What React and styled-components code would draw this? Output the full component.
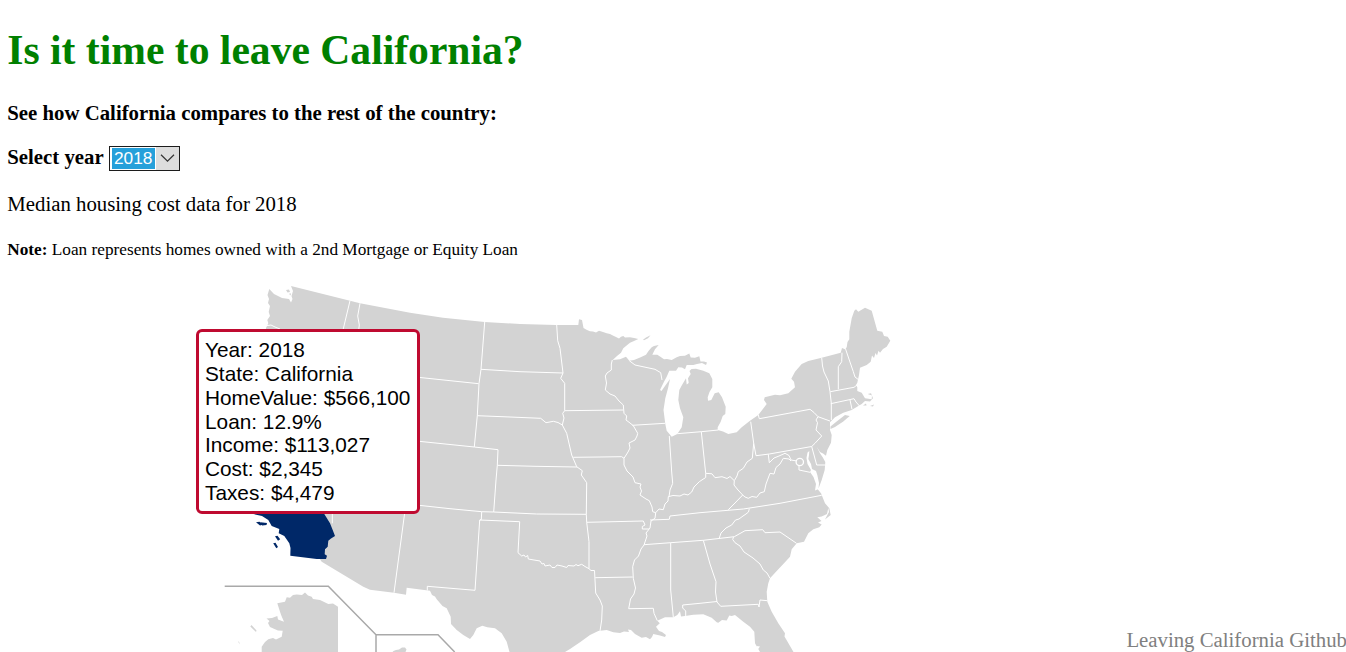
import React from "react";
import styled, { createGlobalStyle } from "styled-components";

const GlobalStyle = createGlobalStyle`
  body {
    margin: 0;
    background: #fff;
    overflow: hidden;
  }
`;

const Page = styled.main`
  position: relative;
  display: flex;
  flex-direction: column;
  width: 100%;
  height: 652px;
  overflow: hidden;
  color: #000;
  font-family: "Liberation Serif", "Times New Roman", serif;
`;

const Intro = styled.header`
  display: flex;
  flex-direction: column;
  flex: none;
  height: 280px;
  box-sizing: border-box;
  padding: 27px 7.3px 0;
  white-space: nowrap;
`;

const Title = styled.h1`
  margin: 0;
  color: green;
  font-size: 41.6px;
  line-height: 47px;
`;

const Subtitle = styled.h4`
  margin: 27px 0 0;
  font-size: 20.8px;
  line-height: 24px;
`;

const YearRow = styled.div`
  display: flex;
  align-items: center;
  gap: 5px;
  height: 25px;
  margin-top: 21px;
`;

const YearLabel = styled.label`
  font-size: 20.8px;
  font-weight: bold;
  line-height: 24px;
  padding-bottom: 3px;
`;

const YearSelect = styled.button`
  display: flex;
  align-items: stretch;
  box-sizing: border-box;
  width: 71px;
  height: 25px;
  padding: 0;
  border: 1px solid #1c1c1c;
  background: #ddd;
`;

const YearValue = styled.span`
  box-sizing: border-box;
  width: 46px;
  border: 1px solid #fff;
  border-left-width: 2px;
  background: #26a0da;
  color: #fff;
  font: 17.33px/21px "Liberation Sans", Arial, sans-serif;
  text-align: center;
`;

const Chevron = styled.svg`
  flex: 1;
  width: 23px;
  height: 23px;
`;

const Summary = styled.p`
  margin: 21px 0 0;
  font-size: 20.8px;
  line-height: 24px;
`;

const Note = styled.p`
  margin: 24px 0 0;
  font-size: 17.24px;
  line-height: 20px;
`;

const MapSvg = styled.svg`
  display: block;
  flex: none;
  width: 1346px;
  height: 372px;

  .land { fill: #d3d3d3; }
  .water { fill: #fff; }
  .border { fill: none; stroke: #fff; stroke-width: 1; stroke-linejoin: round; }
  .district { fill: #d3d3d3; stroke: #fff; stroke-width: 1.3; }
  .selected { fill: #002868; }
  .inset { fill: none; stroke: #a9a9a9; stroke-width: 1.5; }
`;

const Tooltip = styled.aside`
  position: absolute;
  left: 196px;
  top: 329px;
  box-sizing: border-box;
  width: 224px;
  height: 185px;
  padding: 6px;
  border: 3px solid #bf0a30;
  border-radius: 6px;
  background: #fff;
  font: 20.8px/23.85px "Liberation Sans", Arial, sans-serif;
  white-space: nowrap;
`;

const TooltipLine = styled.div``;

const Credit = styled.a`
  position: absolute;
  right: -1px;
  bottom: 0;
  color: gray;
  font-size: 20.8px;
  line-height: 24px;
`;

const mainland = `M269.3 289 L274 294 282 298 289 299 291 302.5 292.5 299 291.5 296 293 291
291 286 350 300.7 360 303.3 410 312.7 443 317.7 484.7 322 520 324 556 325 578.3 325 579 319.3
582 320 583.5 328 587 330 590 331.3 593 331.5 596 332.5 599 330.7 603 332 606.7 333.3 610 334
613.3 335.7 616 337 619 338.5 621 336.8 623.3 336 625 337.5 630 337.3 634 338 638.3 339
634 341 630 342.7 626 346 623.3 348.3 621 352.7 617 356 612.7 360 620 359.3 626 356.7 629.3 360.7
634 360 640.7 357.3 646 354.7 648.5 351 651.7 347.3 654 346 658.7 345 655 349.3 652.3 354.7
657.3 354.7 660 356.5 664 359.3 667 359 671.7 360 676.7 357.3 680 356 685 355.7 689.3 353.5
690.7 357.5 695 357.7 699.3 356.3 700.5 361.5 704 361.5 707 362.5 706 365 702 363 697 364
693.3 365 686.7 365 685 369.3 682 367.5 678.3 367.3 676 370.7 669.3 370.7 666.7 376.7 664 381.7
660 390 661.5 391 665 386 670 379 668 388.3 665.3 398.3 663.5 410 665.3 424 666.7 430.7
671.7 436.7 677.3 434 681.7 427.3 683.3 417.3 680 408.3 678.3 400 679.3 390 682 385 686 378.3
686.7 384.5 688.7 383 688 378.3 690.7 374 689.5 371 691.5 369 696 368.7 703.3 370.7 709.3 373.3
712.3 379 712.3 387.3 709.5 392 707.7 397.3 708 400.7 711.3 400 714.7 393.3 718.7 392.3 722 397.3
725.7 406.7 725.3 414 722.7 416 720.7 421.7 717.7 427.3 717.7 430 723 431.5 728.3 434 736.7 432.3
741.7 427.3 750 420.7 758.3 415 762.7 409.3 766.7 404 764 400 764.7 397.3 775 394.7 780 395.3
788.3 393.3 795 387.3 794 381.7 791.3 378.7 795 371.7 801.7 364 808.3 361 821.7 357.7 840.7 352.7
842 348 845 349.3 846.7 347.3 847.5 342 849.3 339.3 849.3 331.7 851.7 318.3 854.3 310.7 856 309.3
858.3 311.7 865 307.7 871.7 310.7 877.3 330.7 882.3 331.7 884 336 887.7 336.7 890.3 340.7
886.7 346.7 883 349 880 352.7 878.5 350.7 877 355.5 875.5 353 874 358 872 355.5 870.7 361.7
866.7 365 860 367.7 859 375 857.3 382.7 856 385 857.3 387.3 857.3 391 861.7 392.7 865 398.3
871.7 399.3 872 395.5 867.7 394 871 393.3 873 398.3 870 401.5 865 401 861.7 404 858.3 406
851.7 410 843.3 412.7 835 417.3 830 422.3 830 430 831.7 435 831 442.7 827.3 450 826 455.7
823 453.5 820 452 816.7 446.7 820 453.3 822.7 457.3 825.3 462 824.7 470 821.7 480 819 487.3
817.5 489 821 493.3 825 503.3 829.3 508.3 830.7 515 825 519.5 829 512 828.3 508 827 514
821.7 516.5 817.3 517.3 821.5 521 818 522.5 821.7 524.5 819.3 527.3 813.3 529.3 808.3 533.3
804 541.7 796.7 543.3 791.7 549.3 790 556.7 783.3 564 776 571.7 770 578.3 768.3 583.3 766.7 591.7
767.3 601.7 771.7 611.7 778.3 623.3 785 633.3 784.5 636.5 793.5 652 760 652 755 643.3 754.3 631.7
750 626.7 743.3 621.7 735 615 731.7 616 729.3 615.5 726.7 620.5 722 620 718.3 622.7 716.7 622.3
711.7 617.7 703.3 614.3 693.3 614.7 685 616 681 616.5 680 611.3 677.3 615 673.3 617.3 665 617.3
657.3 620.7 659.8 623.3 656 626.7 659 631 662 632 666 635 665 637 660 635.5 653.3 634 652 637
650 639.3 646 637 641.7 637.7 635 634 631 630 628 629.5 629 632 624 631.5 620 633 613.3 632.3
606.7 630 598.3 631 590 635 580 642.3 570 649 565 652 509.5 652 506.7 641.7 501.7 633.3 495 628.3
487.3 627.3 482.3 625.7 476.7 628.3 473.3 635 470 639 463.3 635 456.7 630 451 624 450.7 616.7
446.7 608.3 442.5 606 436.7 599.3 435 596.5 432 595 430 590.7 406.7 587.7 406 594.7 394 592.7
370 589.7 363.3 586.7 321.7 561.7 300 530 260 400 266 328 268.3 323.3 267.3 320 270 316 268.7 312
270 306 268 303 269 299 267.5 295 Z`;

const california = `M240 490 L253.3 514 262 516 268.3 520 271.7 526 279.3 529 278.7 533.3 284.3 536
289.3 543.3 290.5 548 290.3 555.7 316.7 559 326 559 327 555.7 324.7 554.3 325 549.3 327.7 546.7
328.3 540.7 331 538.5 335 536 332.7 530 330 523.3 324.3 514 310 490 Z`;

const longIsland = "M830.5 426.5 L836 422 845 415 849.7 416 843.3 421.5 835 427 830.5 429 Z";

const alaska = `M277.3 603.3 L285 601.7 286.7 597.3 290 597.7 293 595 296.7 594.5 302 595 305 592.5
308 595.5 311.7 596.7 313 599 320 600 328.3 604 333 603.5 338 606.7 338 652 261.7 652 261.7 646.7
265 642 268.3 639.3 273 638 276 639.5 281.7 636.7 282.7 630.7 278 630.5 275 629.3 270 627 268 623
269.5 621 266.5 618.5 272 618 277.3 616 278 619.5 284 621.8 281.5 616 280 611.7 Z`;

const stateBorders = [
  "M266.5 325.7 L271 325 275 327 280 329",
  "M350 300.7 L343 330",
  "M360 303.3 L357.7 316 359.3 325 358.7 330",
  "M419 377.4 L478.7 383.7",
  "M484.7 322 L481 369.3 479 383.7 477.3 415.7 474.3 447",
  "M481 369.3 L520 371.7 563 373",
  "M556.7 325 L557.7 340.7 560 348.3 563 373 560.7 378.3 564.7 383.3 564.7 410.7 562.7 413.3 564 418 562.3 425 566.7 433.3 571.7 455 576.7 466.7 582.3 470.7 581.3 475 586.7 482.7 586.3 514.3 586.7 522.3 589 541.7 589 568.5",
  "M477.3 415.7 L510 417 540.7 418.3 546 422.7 553.3 421.3 558 422.5 562.3 425",
  "M419 441.3 L474.3 447 498 449.7 497.3 465.3 496 480 493.7 512",
  "M497.3 465.3 L535 466.3 577 467",
  "M419 505.3 L450 508.7 481.7 511.7 493.7 512 536.7 514 586.3 514.3",
  "M481.7 511.7 L481.3 519.5 479.7 520 475 590.3 427.3 586.3 427.3 590.5",
  "M480 520 L519.7 521.7 518 552.7 521.7 556 524 555 525.5 557 527.7 555.5 528.3 559 534 560 540 561 542 564 544 563.5 545 566 550 565 552 567.5 555 567.5 557 565 562 566 566.7 567.5 568 565.5 574 566 576 564.5 578 565.7 581.7 564.3 585 566.5 589 568.7 591 570.5 594.5 570.5 595.7 593 600 600 602.3 606 601.7 620 600 631",
  "M595.3 577.7 L632.7 577",
  "M586.7 522.3 L643.3 521 645 525 642.3 526.5 642.3 529 649 529",
  "M564.7 410.7 L623.3 410",
  "M573.3 457.3 L600 457 621.7 456.7 624 458.3",
  "M612.3 360 L611.3 364 611.3 370 607 373 605.3 376 606.5 383 605.3 390 610 394 615 396 619 401 623.3 405 624 413.3 626.7 416 626 420 630 423 633.3 425.7 637.7 433.3 637 436 635 440 629 443 630 448 628 452 624 458.3 624 465 627 471 633 477 635 482.7 641 484 640 487 641.5 491 640 495 646 499 649.3 500.7 652 507 652.7 511.7 655.7 512.7 655 518.3 651 521 650 528 646 533 647 536 644 545 641 549 638.5 556 634.5 560 632.7 566.7 633.3 578.3 635.5 588 634 594 630.5 599 628.7 608.7 653.3 608.3 654 613.3 657.3 620.7",
  "M632.3 425.3 L665 423.3",
  "M629.3 360.7 L635 365 655 369.3 660.7 372.7 662 380",
  "M677.3 433.7 L701.3 431.7 718.3 430",
  "M669.3 436 L671.7 472 672.7 483.3 670 490 669 496.7",
  "M701.3 431.7 L705.7 473.3",
  "M655.7 512.7 L659 509 663.3 509.7 665 504 668 501 668.3 496.7 673 495.5 680 496 684 494 688 495 691.7 492 694 487 699.3 481.7 705.7 477.5 705.7 473.3 712 473.8 715 477.7 722 476.7 727 478.5 730 476.5 734.3 480.7 737 476 738.3 471.7 743.3 468.3 747 462 752.3 458.3 753.7 443.3 750.7 421.7",
  "M753.7 443.3 L756 455.7 769.3 454 811.7 446.5 815 443.3 821.7 436 816 430 817.5 422.7 816 420 818 416.7 814 412.5 810 409.3 759.3 418.7 758.3 415",
  "M818 416.7 L830 421",
  "M821.7 357.7 L822.5 366 824 372 828.3 381 830 391.7 831.3 403.3 831.3 420",
  "M842 352.7 L841.7 361.7 838.3 366.7 838.3 389.3",
  "M830.3 391.7 L854 387.3 857 385",
  "M845.3 348.3 L853.3 371.7 855 377 858 379.3",
  "M830.7 403.7 L854 398.7 856 402 859.5 406",
  "M850 400 L852 409.3",
  "M768.3 454.3 L769.3 462.7 774 458 779 456 785 453.3 789 455.5 791 460 797 461",
  "M799 466 L799 470 810 472.3",
  "M734.3 480.7 L734 485 738 490 742.7 495 745 497 748.3 498.3 752 496.5 756.7 497.3 760 493 764.3 491.7 766 484 770 473.3 774 474 776 467.5 780 464 783.3 458.3 789 459 791 461",
  "M811.7 446.5 L816.7 465 825 465",
  "M742.7 495 L735 503 728.3 509.7",
  "M650 520 L669.3 519.3 670 516 700 512.7 743.3 509 780 503.3 821.7 495.3",
  "M644 544.7 L670.7 542.7 703.3 540.3 734.3 536.7 745 530.7 762.7 529.7 765 532.7 780 532 796.5 543.3",
  "M749.3 508.7 L748.5 512 746 514 743 516 739 519 735.5 520 731.7 525 726 528 721 533 719.3 538",
  "M733.5 537 L732.7 539.5 735 542.7 740 546 744 552 753 558 760 564 763.3 570 767 573 770 578.3",
  "M703.3 540.3 L710 564 716 581.7 715.5 592 717 602 720.7 606.3 758.3 604.3 759 607 760 600 767.3 600.7",
  "M717 601.5 L700 603.3 682.7 605 682.7 608 685.7 611 685.7 616",
  "M670.7 542.7 L670.7 590 673.3 617",
  "M332.3 512 L332.3 523.3",
  "M404.8 512 L394 592.7",
];

const tooltipLines = [
  "Year: 2018",
  "State: California",
  "HomeValue: $566,100",
  "Loan: 12.9%",
  "Income: $113,027",
  "Cost: $2,345",
  "Taxes: $4,479",
];

function StatesMap() {
  return (
    <MapSvg viewBox="0 280 1346 372" role="img" aria-label="United States">
      <path className="land" d={mainland} />
      <path className="land" d={longIsland} />
      <path className="land" d="M643 339.7 L646 337.5 650.5 335.3 648 338.3 644 340.2 Z" />
      <path className="land" d="M286 290 L289 289.5 290 292 287.5 292.5 Z M289 294 L290.5 293 291 295.5 Z" />
      <path className="land" d="M863 405.5 L866 403.5 866.5 405.5 Z M870 406 L874 404.5 873 406.5 Z" />
      <g className="border">
        {stateBorders.map((d) => (
          <path key={d} d={d} />
        ))}
      </g>
      <path className="water" d="M807.5 452.5 L809.3 451 809 455 808.3 459 811 464 812 469 816 471 817.3 475 819 483 818.5 489 815 490.5 816 484 813.5 477 810 472 811 470 807.5 464 806.5 458 Z" />
      <path className="water" d="M756.5 646 L760 646.5 757.5 650 Z" />
      <circle className="district" cx="799.8" cy="462" r="3.7" />
      <path className="selected" d={california} />
      <path className="selected" d="M256 522.3 L259.5 521.7 263 524.5 260 525.6 Z M260.5 522.2 L267 523 266.5 525 262 525.4 Z M275 536.3 L277.5 535.7 280.2 539.3 278 540.8 Z M273.2 543.3 L275.5 542.7 278 547 276.3 548.3 Z" />
      <path className="land" d={alaska} />
      <path className="land" d="M250.3 626.5 L251.5 625 256.5 630.5 256 632 Z M238 641.5 L239 641.7 240 644.5 Z" />
      <path className="land" d="M392.5 652 L393.5 651 396 650 399 649.5 402 647.5 405 647.5 406.5 649.5 405.5 652 Z" />
      <path className="inset" d="M224.7 586.2 H328.3 L376 634.8 V652 M376 634.8 H438 L454.7 652" />
    </MapSvg>
  );
}

export default function App() {
  return (
    <>
      <GlobalStyle />
      <Page>
        <Intro>
          <Title>Is it time to leave California?</Title>
          <Subtitle>See how California compares to the rest of the country:</Subtitle>
          <YearRow>
            <YearLabel>Select year</YearLabel>
            <YearSelect>
              <YearValue>2018</YearValue>
              <Chevron viewBox="0 0 23 23" fill="none" stroke="#333" strokeWidth="1.2">
                <path d="M5 7.8 L11.5 14.2 18 7.8" />
              </Chevron>
            </YearSelect>
          </YearRow>
          <Summary>Median housing cost data for 2018</Summary>
          <Note>
            <b>Note:</b> Loan represents homes owned with a 2nd Mortgage or Equity Loan
          </Note>
        </Intro>
        <StatesMap />
        <Tooltip>
          {tooltipLines.map((line) => (
            <TooltipLine key={line}>{line}</TooltipLine>
          ))}
        </Tooltip>
        <Credit>Leaving California Github</Credit>
      </Page>
    </>
  );
}
